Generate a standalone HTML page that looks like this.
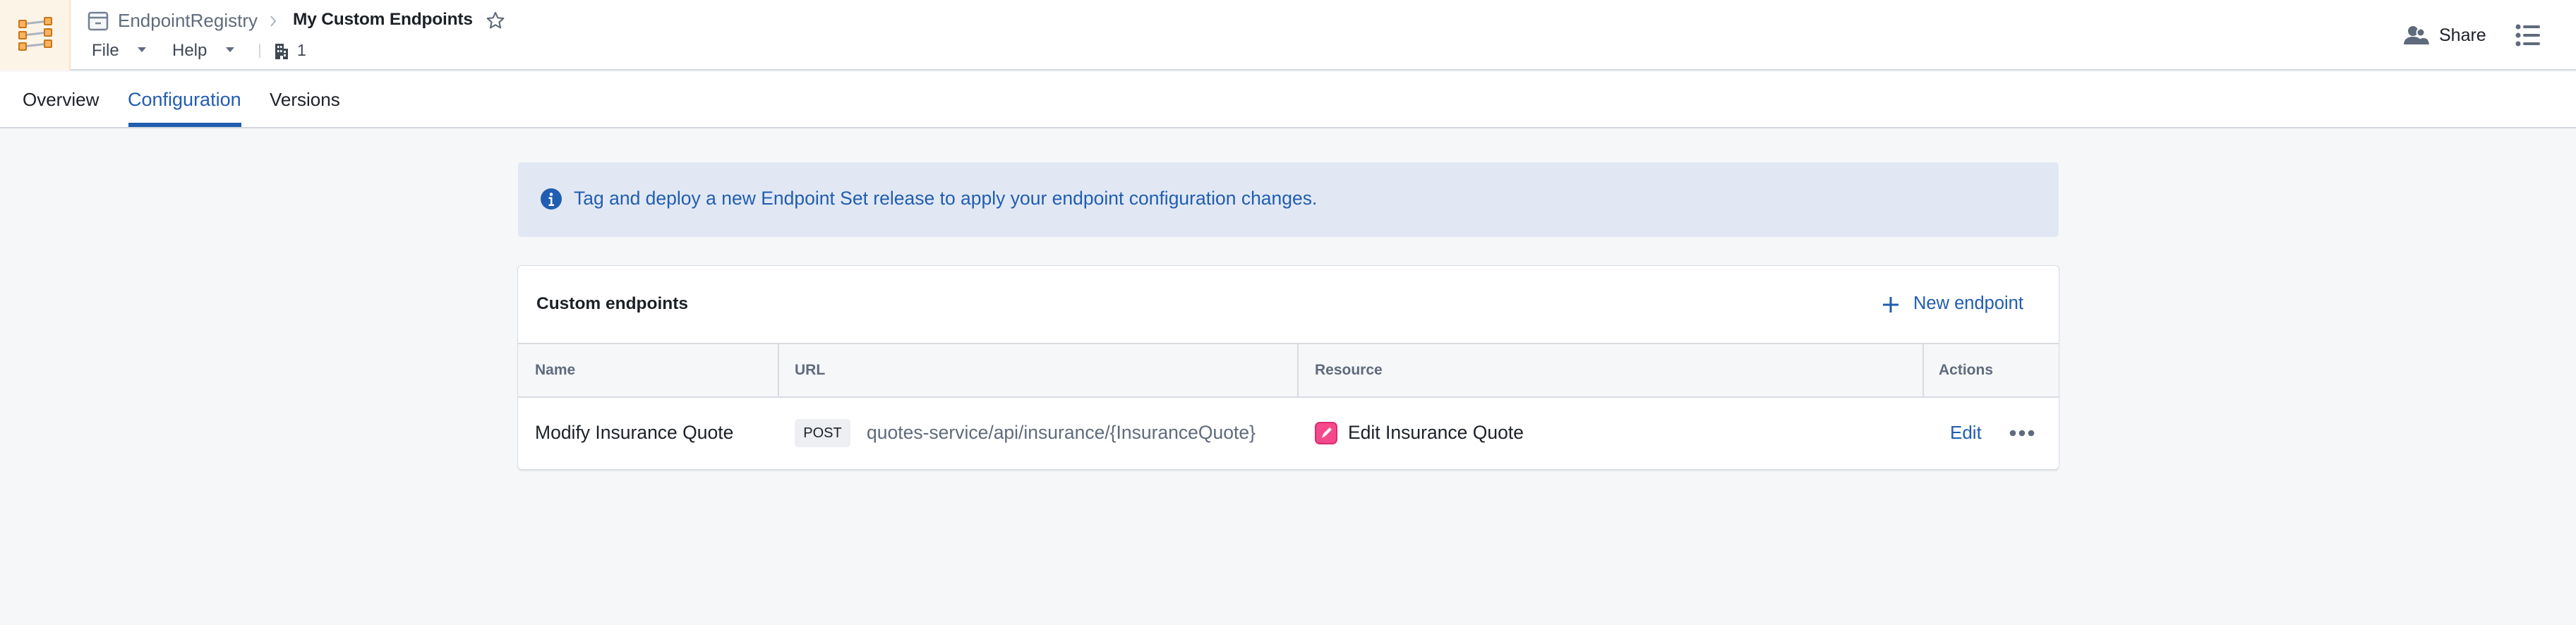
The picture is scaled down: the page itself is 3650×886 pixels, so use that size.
<!DOCTYPE html>
<html><head><meta charset="utf-8"><style>
*{margin:0;padding:0;box-sizing:border-box}
body{width:3650px;height:886px;background:#f6f7f9;font-family:"Liberation Sans",sans-serif;color:#1c2127;position:relative;overflow:hidden}
.a{position:absolute;white-space:nowrap}
</style></head><body>
<div class="a" style="left:0;top:0;width:3650px;height:100px;background:#fff;border-bottom:2px solid #d3d8de"></div>
<div class="a" style="left:0;top:0;width:100px;height:100px;background:#fdf4e8;border-right:2px solid #fbe3c4"></div>
<svg class="a" style="left:24px;top:24px" width="52" height="52" viewBox="0 0 52 52">
<g stroke="#abb3bf" stroke-width="3"><line x1="8" y1="10" x2="44" y2="6"/><line x1="8" y1="26" x2="44" y2="22"/><line x1="8" y1="42" x2="44" y2="38"/></g>
<g fill="#fbb360" stroke="#c87619" stroke-width="2"><rect x="3" y="5" width="10" height="10" rx="1"/><rect x="39" y="1" width="10" height="10" rx="1"/><rect x="3" y="21" width="10" height="10" rx="1"/><rect x="39" y="17" width="10" height="10" rx="1"/><rect x="3" y="37" width="10" height="10" rx="1"/><rect x="39" y="33" width="10" height="10" rx="1"/></g>
</svg>
<svg class="a" style="left:124px;top:16px" width="30" height="28" viewBox="0 0 30 28"><rect x="2" y="2" width="26" height="24" rx="3" fill="#f6f7f9" stroke="#738091" stroke-width="2.5"/><line x1="2" y1="9" x2="28" y2="9" stroke="#738091" stroke-width="2.5"/><line x1="11" y1="17" x2="19" y2="17" stroke="#738091" stroke-width="2.5"/></svg>
<div class="a" style="left:167px;top:14px;font-size:26px;color:#5f6b7c">EndpointRegistry</div>
<svg class="a" style="left:381px;top:20px" width="12" height="20" viewBox="0 0 12 20"><path d="M3 3l6 7-6 7" fill="none" stroke="#abb3bf" stroke-width="2"/></svg>
<div class="a" style="left:415px;top:14px;font-size:24.5px;font-weight:bold;letter-spacing:-0.2px">My Custom Endpoints</div>
<svg class="a" style="left:687px;top:15px" width="30" height="28" viewBox="0 0 24 24"><path d="M12 2.5l2.9 6.3 6.8.7-5.1 4.6 1.5 6.8L12 17.4l-6.1 3.5 1.5-6.8L2.3 9.5l6.8-.7z" fill="none" stroke="#5f6b7c" stroke-width="1.8" stroke-linejoin="round"/></svg>
<div class="a" style="left:130px;top:58px;font-size:24px;color:#404854">File</div>
<svg class="a" style="left:195px;top:67px" width="12" height="8"><path d="M0 0h12L6 7z" fill="#5f6b7c"/></svg>
<div class="a" style="left:244px;top:58px;font-size:24px;color:#404854">Help</div>
<svg class="a" style="left:320px;top:67px" width="12" height="8"><path d="M0 0h12L6 7z" fill="#5f6b7c"/></svg>
<div class="a" style="left:367px;top:62px;width:2px;height:20px;background:#d3d8de"></div>
<svg class="a" style="left:390px;top:62px" width="18" height="22" viewBox="0 0 18 22"><path d="M0 0h12v7h6v15H11v-5H7v5H0z" fill="#404854"/><g fill="#fff"><rect x="3" y="3" width="2.5" height="3"/><rect x="7" y="3" width="2.5" height="3"/><rect x="3" y="9" width="2.5" height="3"/><rect x="7" y="9" width="2.5" height="3"/><rect x="12" y="10" width="3" height="3"/><rect x="12" y="15" width="3" height="3"/></g></svg>
<div class="a" style="left:421px;top:58px;font-size:23px;color:#404854">1</div>
<svg class="a" style="left:3406px;top:36px" width="36" height="28" viewBox="0 0 36 28"><circle cx="13" cy="8" r="7" fill="#5f6b7c"/><path d="M0 27c0-7 5-11 13-11s13 4 13 11z" fill="#5f6b7c"/><circle cx="24" cy="10" r="5.5" fill="#5f6b7c" stroke="#fff" stroke-width="2"/><path d="M20 27c0-6 3-9 8-9s7 3 8 9z" fill="#5f6b7c"/></svg>
<div class="a" style="left:3456px;top:36px;font-size:25px;color:#1c2127">Share</div>
<svg class="a" style="left:3564px;top:34px" width="36" height="32" viewBox="0 0 36 32"><g fill="#5f6b7c"><circle cx="4" cy="4" r="3.5"/><circle cx="4" cy="16" r="3.5"/><circle cx="4" cy="28" r="3.5"/><rect x="11" y="2" width="24" height="4" rx="2"/><rect x="11" y="14" width="24" height="4" rx="2"/><rect x="11" y="26" width="24" height="4" rx="2"/></g></svg>
<div class="a" style="left:0;top:102px;width:3650px;height:80px;background:#fff;border-bottom:2px solid #d3d8de"></div>
<div class="a" style="left:32px;top:126px;font-size:26px;color:#1c2127">Overview</div>
<div class="a" style="left:181px;top:126px;font-size:27px;color:#215db0">Configuration</div>
<div class="a" style="left:182px;top:174px;width:160px;height:6px;background:#215db0"></div>
<div class="a" style="left:382px;top:126px;font-size:26px;color:#1c2127">Versions</div>
<div class="a" style="left:734px;top:230px;width:2183px;height:106px;background:#e1e8f4;border-radius:5px"></div>
<svg class="a" style="left:766px;top:267px" width="30" height="30" viewBox="0 0 30 30"><circle cx="15" cy="15" r="15" fill="#215db0"/><circle cx="15" cy="8.5" r="2.3" fill="#fff"/><path d="M11.5 12.5h5v10h2.5v2.5h-7.5v-2.5h2.5v-7.5h-2.5z" fill="#fff"/></svg>
<div class="a" style="left:813px;top:266px;font-size:26.5px;color:#215db0">Tag and deploy a new Endpoint Set release to apply your endpoint configuration changes.</div>
<div class="a" style="left:734px;top:377px;width:2183px;height:288px;background:#fff;border-radius:5px;box-shadow:0 0 0 1px #d8dce1,0 2px 2px rgba(17,20,24,.15)"></div>
<div class="a" style="left:760px;top:417px;font-size:24.5px;font-weight:bold">Custom endpoints</div>
<svg class="a" style="left:2667px;top:420px" width="24" height="24"><path d="M12 1v22M1 12h22" stroke="#215db0" stroke-width="3"/></svg>
<div class="a" style="left:2711px;top:416px;font-size:25.5px;color:#215db0">New endpoint</div>
<div class="a" style="left:734px;top:486px;width:2183px;height:78px;background:#f6f7f9;border-top:2px solid #d8dce1;border-bottom:2px solid #d8dce1"></div>
<div class="a" style="left:1102px;top:486px;width:2px;height:78px;background:#d8dce1"></div>
<div class="a" style="left:1838px;top:486px;width:2px;height:78px;background:#d8dce1"></div>
<div class="a" style="left:2724px;top:486px;width:2px;height:78px;background:#d8dce1"></div>
<div class="a" style="left:758px;top:513px;font-size:21px;font-weight:bold;color:#5f6b7c">Name</div>
<div class="a" style="left:1126px;top:513px;font-size:21px;font-weight:bold;color:#5f6b7c">URL</div>
<div class="a" style="left:1863px;top:513px;font-size:21px;font-weight:bold;color:#5f6b7c">Resource</div>
<div class="a" style="left:2747px;top:513px;font-size:21px;font-weight:bold;color:#5f6b7c">Actions</div>
<div class="a" style="left:758px;top:598px;font-size:26.5px">Modify Insurance Quote</div>
<div class="a" style="left:1126px;top:594px;width:79px;height:40px;background:#edeff2;border-radius:5px;font-size:20px;line-height:40px;text-align:center;color:#1c2127">POST</div>
<div class="a" style="left:1228px;top:598px;font-size:26.5px;color:#5f6b7c">quotes-service/api/insurance/{InsuranceQuote}</div>
<svg class="a" style="left:1863px;top:598px" width="32" height="32" viewBox="0 0 32 32"><rect x="1" y="1" width="30" height="30" rx="6" fill="#f5498b" stroke="#db2c6f" stroke-width="2"/><path d="M10 23l2-6 9-9 3 3-9 9z" fill="#fff"/></svg>
<div class="a" style="left:1910px;top:598px;font-size:26.5px">Edit Insurance Quote</div>
<div class="a" style="left:2763px;top:598px;font-size:26px;color:#215db0">Edit</div>
<svg class="a" style="left:2847px;top:608px" width="36" height="12"><g fill="#5f6b7c"><circle cx="5" cy="6" r="4.3"/><circle cx="18" cy="6" r="4.3"/><circle cx="31" cy="6" r="4.3"/></g></svg>
</body></html>
